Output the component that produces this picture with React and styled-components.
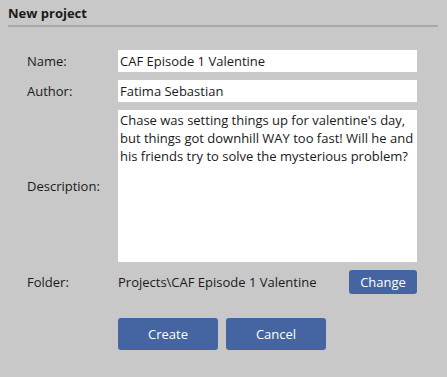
import * as React from "react";
import styled, { createGlobalStyle } from "styled-components";

const GlobalStyle = createGlobalStyle`
    html, body {
        margin: 0;
        padding: 0;
        background: #c8c8c8;
    }
    body {
        font-family: "Open Sans", "Noto Sans", sans-serif;
        font-size: 13px;
        color: #1a1a1a;
    }
`;

function NewProjectDialog() {
    const [name, setName] = React.useState("CAF Episode 1 Valentine");
    const [author, setAuthor] = React.useState("Fatima Sebastian");
    const [description, setDescription] = React.useState(
        "Chase was setting things up for valentine's day, but things got downhill WAY too fast! Will he and his friends try to solve the mysterious problem?"
    );

    return (
        <Dialog>
            <GlobalStyle />
            <Header>New project</Header>
            <Form>
                <Label>Name:</Label>
                <TextInput value={name} onChange={(e) => setName(e.target.value)} />
                <Label>Author:</Label>
                <TextInput value={author} onChange={(e) => setAuthor(e.target.value)} />
                <Label>Description:</Label>
                <TextArea
                    value={description}
                    onChange={(e) => setDescription(e.target.value)}
                />
                <Label>Folder:</Label>
                <FolderRow>
                    <FolderPath>Projects\CAF Episode 1 Valentine</FolderPath>
                    <Button $small>Change</Button>
                </FolderRow>
                <Actions>
                    <Button>Create</Button>
                    <Button>Cancel</Button>
                </Actions>
            </Form>
        </Dialog>
    );
}

const Dialog = styled.div`
    width: 447px;
    height: 377px;
    box-sizing: border-box;
    padding: 6px 9px 0 8px;
`;
const Header = styled.h1`
    margin: 0;
    padding: 0 0 4px;
    font-size: 13px;
    font-weight: 700;
    line-height: 15px;
    color: #1a1a1a;
    border-bottom: 2px solid #a9a9a9;
`;
const Form = styled.div`
    display: grid;
    grid-template-columns: 91px 299px;
    grid-template-rows: 22px 22px 152px 24px 48px;
    row-gap: 8px;
    align-items: center;
    margin: 23px 0 0 19px;
`;
const Label = styled.label`
    font-size: 13px;
    color: #1a1a1a;
`;
const TextInput = styled.input`
    box-sizing: border-box;
    width: 100%;
    height: 22px;
    border: none;
    outline: none;
    background: #fff;
    padding: 0 2px;
    font-family: "Open Sans", "Noto Sans", sans-serif;
    font-size: 13px;
    color: #1a1a1a;
`;
const TextArea = styled.textarea`
    box-sizing: border-box;
    width: 100%;
    height: 152px;
    border: none;
    outline: none;
    resize: none;
    background: #fff;
    padding: 1px 2px;
    font-family: "Open Sans", "Noto Sans", sans-serif;
    font-size: 13px;
    line-height: 18px;
    color: #1a1a1a;
`;
const FolderRow = styled.div`
    display: flex;
    align-items: center;
    justify-content: space-between;
`;
const FolderPath = styled.span`
    font-size: 13px;
    color: #1a1a1a;
`;
const Actions = styled.div`
    grid-column: 2;
    align-self: end;
    display: flex;
    gap: 8px;
`;
const Button = styled.button`
    box-sizing: border-box;
    width: ${(p) => (p.$small ? "68px" : "100px")};
    height: ${(p) => (p.$small ? "24px" : "32px")};
    border: none;
    border-radius: 3px;
    background: #4465a1;
    color: #fff;
    font-family: "Open Sans", "Noto Sans", sans-serif;
    font-size: 13px;
    padding: 0;
    cursor: pointer;
`;

export default NewProjectDialog;
